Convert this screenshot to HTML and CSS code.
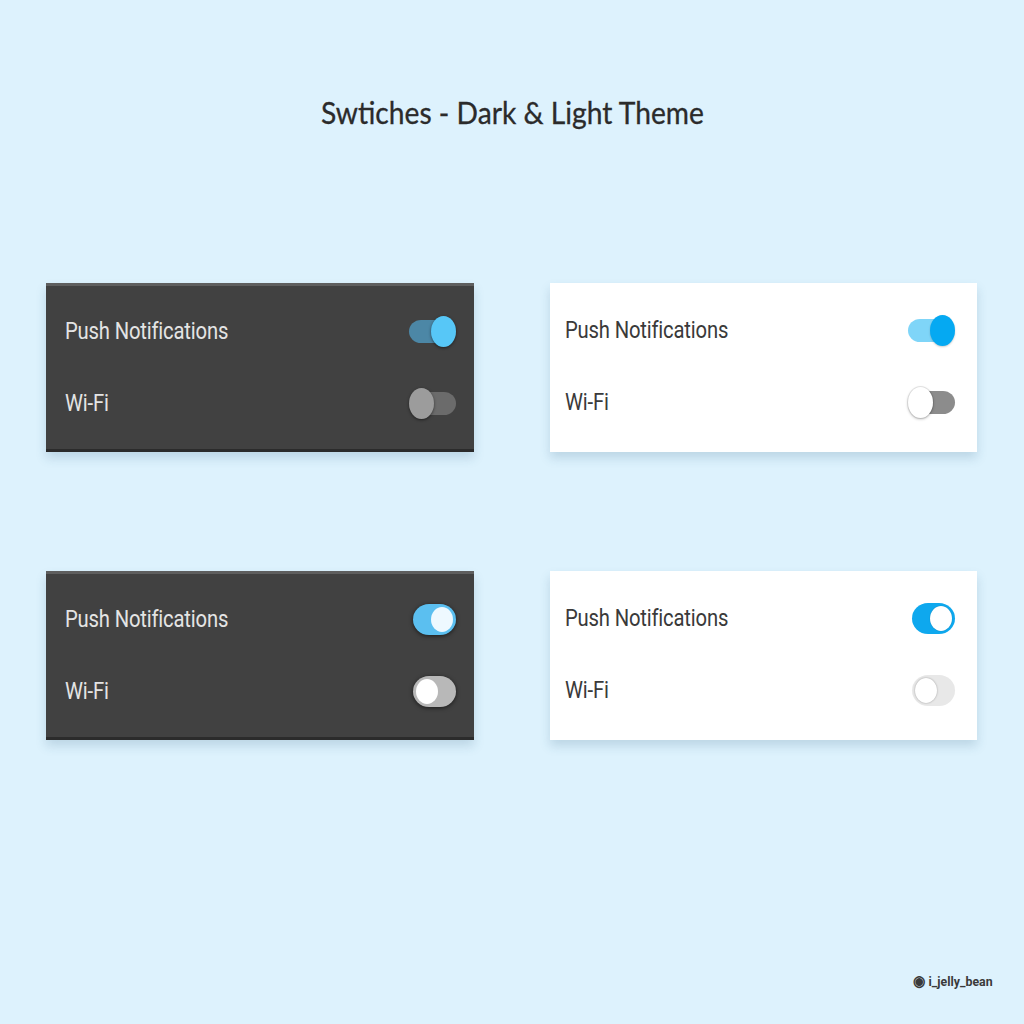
FILE: index.html
```html
<!DOCTYPE html>
<html>
<head>
<meta charset="utf-8">
<link rel="stylesheet" href="styles.css">
</head>
<body>
<div class="page">
  <h1 class="title"><span>Swtiches - Dark &amp; Light Theme</span></h1>
  <div class="grid">
    <div class="card dark">
      <div class="row"><span class="label">Push Notifications</span><span class="sw md on"><span class="track"></span><span class="thumb"></span></span></div>
      <div class="row"><span class="label">Wi-Fi</span><span class="sw md off"><span class="track"></span><span class="thumb"></span></span></div>
    </div>
    <div class="card light">
      <div class="row"><span class="label">Push Notifications</span><span class="sw md on"><span class="track"></span><span class="thumb"></span></span></div>
      <div class="row"><span class="label">Wi-Fi</span><span class="sw md off"><span class="track"></span><span class="thumb"></span></span></div>
    </div>
    <div class="card dark">
      <div class="row"><span class="label">Push Notifications</span><span class="sw ios on"><span class="thumb"></span></span></div>
      <div class="row"><span class="label">Wi-Fi</span><span class="sw ios off"><span class="thumb"></span></span></div>
    </div>
    <div class="card light">
      <div class="row"><span class="label">Push Notifications</span><span class="sw ios on"><span class="thumb"></span></span></div>
      <div class="row"><span class="label">Wi-Fi</span><span class="sw ios off"><span class="thumb"></span></span></div>
    </div>
  </div>
  <div class="credit"><span class="ig">&#9673;</span> i_jelly_bean</div>
</div>
</body>
</html>
```

FILE: styles.css
```css
html, body {
  margin: 0;
  padding: 0;
}
body {
  background: #ddf2fd;
  font-family: Roboto, "Liberation Sans", sans-serif;
}
.page {
  height: 1024px;
  display: flex;
  flex-direction: column;
  box-sizing: border-box;
}
.title {
  margin: 92px 0 0;
  height: 40px;
  line-height: 40px;
  text-align: center;
  font-family: Lato, "Noto Sans", sans-serif;
  font-weight: 400;
  font-size: 31px;
  color: #2b2b2b;
}
.title span {
  display: inline-block;
  transform: scaleX(0.91);
  -webkit-text-stroke: 0.3px #2b2b2b;
}
.grid {
  margin: 151px 47px 0 46px;
  display: grid;
  grid-template-columns: 428px 427px;
  column-gap: 76px;
  row-gap: 119px;
}
.card {
  box-sizing: border-box;
  height: 169px;
  padding: 23px 18px 0 19px;
  display: flex;
  flex-direction: column;
  gap: 20px;
  box-shadow: 0 6px 10px rgba(40, 90, 120, 0.18);
}
.card.dark {
  background: #414141;
  border-top: 3px solid #5e5e5e;
  border-bottom: 3px solid #2b2b2b;
  padding-top: 20px;
}
.card.light {
  background: #ffffff;
  padding: 22px 22px 0 15px;
}
.row {
  height: 50px;
  display: flex;
  align-items: center;
  justify-content: space-between;
}
.row + .row {
  padding-top: 2px;
}
.label {
  display: inline-block;
  font-size: 23px;
  transform: scaleX(0.88);
  transform-origin: left center;
  letter-spacing: -0.2px;
}
.dark .label { color: #e4e4e4; }
.light .label { color: #3a3a3a; }

/* switches */
.sw {
  position: relative;
  display: block;
  flex: none;
}
.sw.md {
  width: 47px;
  height: 31px;
}
.sw.md .track {
  position: absolute;
  left: 0;
  right: 4px;
  top: 4px;
  height: 23px;
  border-radius: 12px / 11.5px;
}
.sw.md .thumb {
  position: absolute;
  top: 0;
  width: 25px;
  height: 31px;
  border-radius: 50%;
}
.sw.md.on .thumb { right: 0; }
.sw.md.off .thumb { left: 0; }
.sw.md.off .track { left: 4px; right: 0; }

.dark .sw.md.on .track { background: #4c87a6; }
.dark .sw.md.on .thumb { background: #57c7f7; box-shadow: 0 1px 3px rgba(0,0,0,0.5); }
.dark .sw.md.off .track { background: #6b6b6b; }
.dark .sw.md.off .thumb { background: #9c9c9c; box-shadow: 0 1px 3px rgba(0,0,0,0.5); }

.light .sw.md.on .track { background: #7fd5f8; }
.light .sw.md.on .thumb { background: #05a9f2; box-shadow: 0 1px 2px rgba(0,0,0,0.2); }
.light .sw.md.off .track { background: #8c8c8c; }
.light .sw.md.off .thumb { background: #ffffff; box-shadow: 0 0 0 1px rgba(0,0,0,0.08), 0 1px 3px rgba(0,0,0,0.3); }

.sw.ios {
  width: 43px;
  height: 31px;
  border-radius: 16px / 15.5px;
}
.sw.ios .thumb {
  position: absolute;
  top: 3px;
  width: 22px;
  height: 25px;
  border-radius: 50%;
  background: #ffffff;
}
.sw.ios.on .thumb { right: 3px; }
.sw.ios.off .thumb { left: 3px; }

.dark .sw.ios.on { background: #5bbff0; box-shadow: 0 1px 4px rgba(0,0,0,0.6); }
.dark .sw.ios.on .thumb { background: #eef9ff; }
.dark .sw.ios.off { background: #b8b8b8; box-shadow: 0 1px 4px rgba(0,0,0,0.6); }
.light .sw.ios.on { background: #0ea8ee; }
.light .sw.ios.on .thumb { box-shadow: 0 0 1px rgba(0,0,0,0.3); }
.light .sw.ios.off { background: #e8e8e8; }
.light .sw.ios.off .thumb { box-shadow: 0 0 2px rgba(0,0,0,0.35); }

.credit {
  margin-top: auto;
  margin-bottom: 35px;
  align-self: flex-end;
  margin-right: 31px;
  font-family: Roboto, "Liberation Sans", sans-serif;
  font-size: 13px;
  font-weight: 700;
  color: #3a3a3a;
  line-height: 14px;
  transform: scaleX(0.95);
  transform-origin: right center;
}
.ig { font-size: 15px; }
```
